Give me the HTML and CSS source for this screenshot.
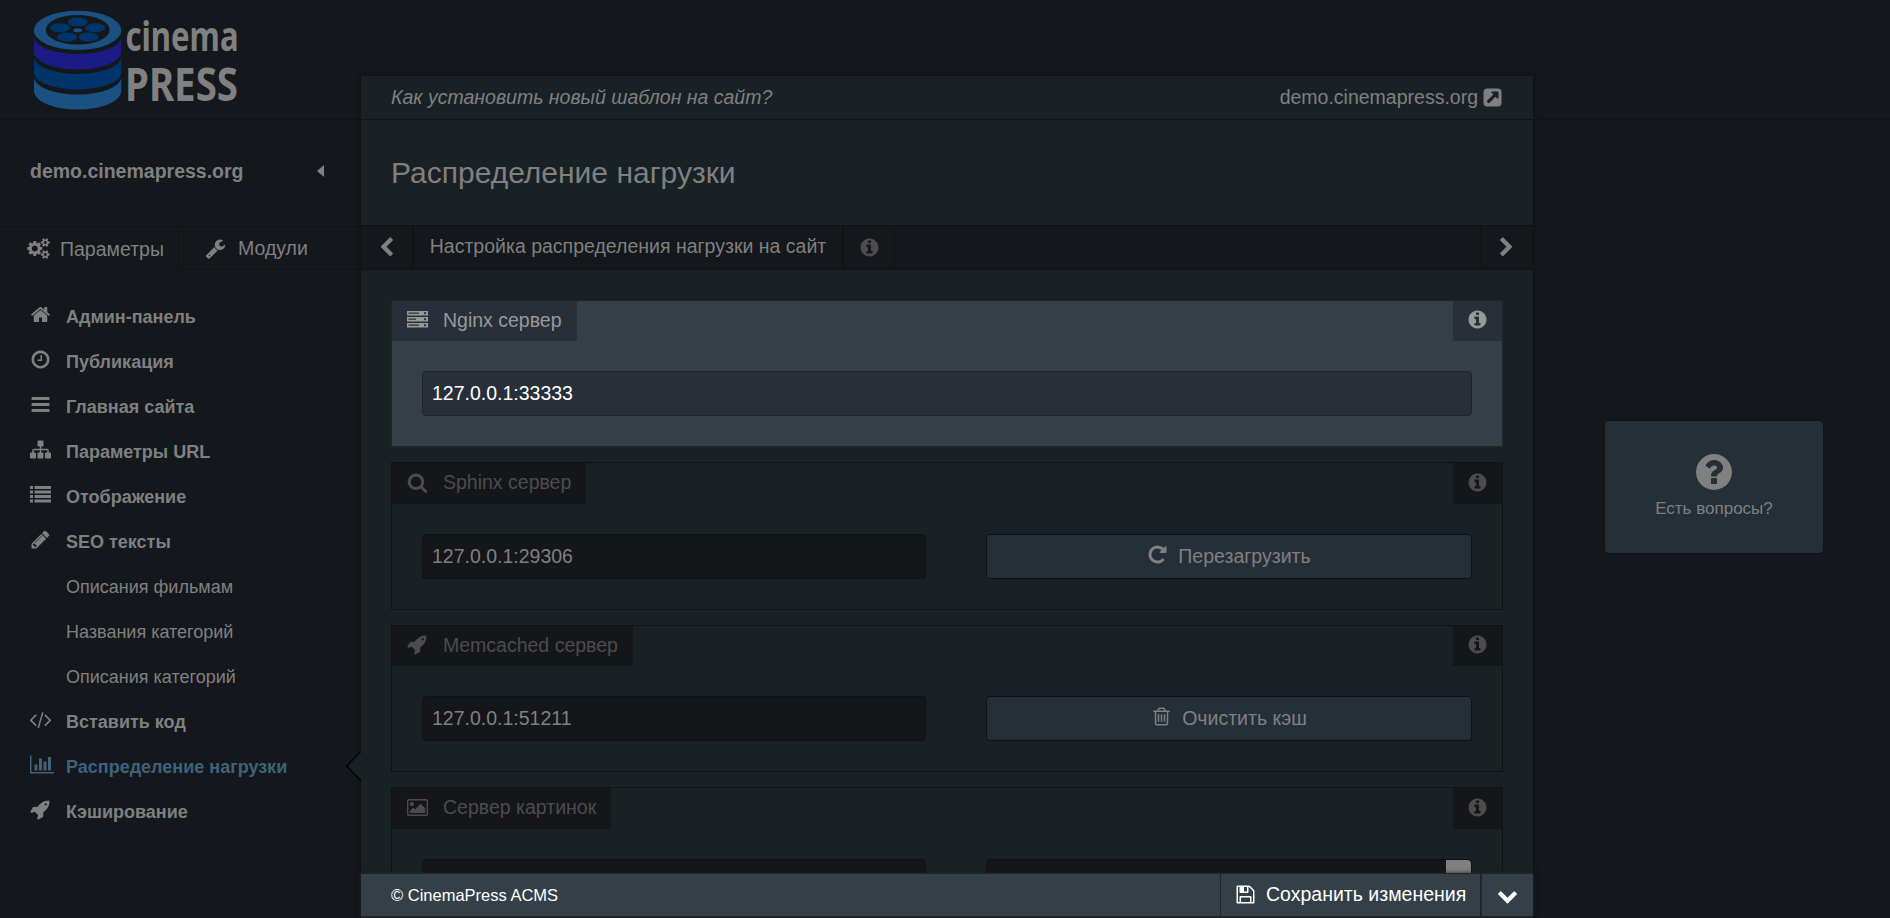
FILE: index.html
```html
<!DOCTYPE html>
<html lang="ru">
<head>
<meta charset="utf-8">
<title>CinemaPress ACMS</title>
<link rel="stylesheet" href="styles.css">
</head>
<body>
<svg class="sprite" aria-hidden="true">
  <symbol id="home" viewBox="0 0 1792 1792"><path d="M1472 992v480q0 26-19 45t-45 19h-384v-384h-256v384h-384q-26 0-45-19t-19-45v-480q0-1 .5-3t.5-3l575-474 575 474q1 2 1 6zm223-69l-62 74q-8 9-21 11h-3q-13 0-21-7l-692-577-692 577q-12 8-24 7-13-2-21-11l-62-74q-8-10-7-23.5t11-21.5l719-599q32-26 76-26t76 26l244 204v-195q0-14 9-23t23-9h192q14 0 23 9t9 23v408l219 182q10 8 11 21.5t-7 23.5z"/></symbol>
  <symbol id="clock" viewBox="0 0 1792 1792"><path d="M1024 544v448q0 14-9 23t-23 9h-320q-14 0-23-9t-9-23v-64q0-14 9-23t23-9h224v-352q0-14 9-23t23-9h64q14 0 23 9t9 23zm416 352q0-148-73-273t-198-198-273-73-273 73-198 198-73 273 73 273 198 198 273 73 273-73 198-198 73-273zm224 0q0 209-103 385.5t-279.5 279.5-385.5 103-385.5-103-279.5-279.5-103-385.5 103-385.5 279.5-279.5 385.5-103 385.5 103 279.5 279.5 103 385.5z"/></symbol>
  <symbol id="bars" viewBox="0 0 1792 1792"><path d="M1664 1344v128q0 26-19 45t-45 19h-1408q-26 0-45-19t-19-45v-128q0-26 19-45t45-19h1408q26 0 45 19t19 45zm0-512v128q0 26-19 45t-45 19h-1408q-26 0-45-19t-19-45v-128q0-26 19-45t45-19h1408q26 0 45 19t19 45zm0-512v128q0 26-19 45t-45 19h-1408q-26 0-45-19t-19-45v-128q0-26 19-45t45-19h1408q26 0 45 19t19 45z"/></symbol>
  <symbol id="sitemap" viewBox="0 0 1792 1792"><path d="M1792 1248v320q0 40-28 68t-68 28h-320q-40 0-68-28t-28-68v-320q0-40 28-68t68-28h96v-192h-512v192h96q40 0 68 28t28 68v320q0 40-28 68t-68 28h-320q-40 0-68-28t-28-68v-320q0-40 28-68t68-28h96v-192h-512v192h96q40 0 68 28t28 68v320q0 40-28 68t-68 28h-320q-40 0-68-28t-28-68v-320q0-40 28-68t68-28h96v-192q0-52 38-90t90-38h512v-192h-96q-40 0-68-28t-28-68v-320q0-40 28-68t68-28h320q40 0 68 28t28 68v320q0 40-28 68t-68 28h-96v192h512q52 0 90 38t38 90v192h96q40 0 68 28t28 68z"/></symbol>
  <symbol id="list" viewBox="0 0 1792 1792"><path d="M0 160h256v256H0zM384 160h1408v256H384zM0 544h256v256H0zM384 544h1408v256H384zM0 928h256v256H0zM384 928h1408v256H384zM0 1312h256v256H0zM384 1312h1408v256H384z"/></symbol>
  <symbol id="pencil" viewBox="0 0 1792 1792"><path d="M491 1536l91-91-235-235-91 91v107h128v128h107zm523-928q0-22-22-22-10 0-17 7l-542 542q-7 7-7 17 0 22 22 22 10 0 17-7l542-542q7-7 7-17zm-54-192l416 416-832 832h-416v-416zm683 96q0 53-37 90l-166 166-416-416 166-165q36-38 90-38 53 0 91 38l235 234q37 39 37 91z"/></symbol>
  <symbol id="code" viewBox="0 0 1792 1792"><path d="M553 1399l-50 50q-10 10-23 10t-23-10l-466-466q-10-10-10-23t10-23l466-466q10-10 23-10t23 10l50 50q10 10 10 23t-10 23l-393 393 393 393q10 10 10 23t-10 23zm591-1067l-373 1291q-4 13-15.5 19.5t-23.5 2.5l-62-17q-13-4-19.5-15.5t-2.5-24.5l373-1291q4-13 15.5-19.5t23.5-2.5l62 17q13 4 19.5 15.5t2.5 24.5zm657 651l-466 466q-10 10-23 10t-23-10l-50-50q-10-10-10-23t10-23l393-393-393-393q-10-10-10-23t10-23l50-50q10-10 23-10t23 10l466 466q10 10 10 23t-10 23z"/></symbol>
  <symbol id="chart" viewBox="0 0 2048 1792"><path d="M640 896v512h-256v-512h256zm384-512v1024h-256v-1024h256zm1024 1152v128h-2048v-1536h128v1408h1920zm-640-896v768h-256v-768h256zm384-384v1152h-256v-1152h256z"/></symbol>
  <symbol id="rocket" viewBox="0 0 1792 1792"><path d="M1440 448q0-40-28-68t-68-28-68 28-28 68 28 68 68 28 68-28 28-68zm224-288q0 249-75.5 430.5t-253.5 360.5q-81 80-195 176l-20 379q-2 16-16 26l-384 224q-7 4-16 4-12 0-23-9l-64-64q-13-14-8-32l85-276-281-281-276 85q-3 1-9 1-14 0-23-9l-64-64q-17-19-5-39l224-384q10-14 26-16l379-20q96-114 176-195 188-187 358-258t431-71q14 0 24 9.5t10 22.5z"/></symbol>
  <symbol id="wrench" viewBox="0 0 1792 1792"><path d="M448 1472q0-26-19-45t-45-19-45 19-19 45 19 45 45 19 45-19 19-45zm644-420l-682 682q-37 37-90 37-52 0-91-37l-106-108q-38-36-38-90 0-53 38-91l681-681q39 98 114.5 173.5t173.5 114.5zm634-435q0 39-23 106-47 134-164.5 217.5t-258.5 83.5q-185 0-316.5-131.5t-131.5-316.5 131.5-316.5 316.5-131.5q58 0 121.5 16.5t107.5 46.5q16 11 16 28t-16 28l-293 169v224l193 107q5-3 79-48.5t135.5-81 70.5-35.5q15 0 23.5 10t8.5 25z"/></symbol>
  <symbol id="cogs" viewBox="0 0 1920 1792"><path d="M896 896q0-106-75-181t-181-75-181 75-75 181 75 181 181 75 181-75 75-181zm768 512q0-52-38-90t-90-38-90 38-38 90q0 53 37.5 90.5t90.5 37.5 90.5-37.5 37.5-90.5zm0-1024q0-52-38-90t-90-38-90 38-38 90q0 53 37.5 90.5t90.5 37.5 90.5-37.5 37.5-90.5zm-384 421v185q0 10-7 19.5t-16 10.5l-155 24q-11 35-32 76 34 48 90 115 7 11 7 20 0 12-7 19-23 30-82.5 89.5t-78.5 59.5q-11 0-21-7l-115-90q-37 19-77 31-11 108-23 155-7 24-30 24h-186q-11 0-20-7.5t-10-17.5l-23-153q-34-10-75-31l-118 89q-7 7-20 7-11 0-21-8-144-133-144-160 0-9 7-19 10-14 41-53t47-61q-23-44-35-82l-152-24q-10-1-17-9.5t-7-19.5v-185q0-10 7-19.5t16-10.5l155-24q11-35 32-76-34-48-90-115-7-11-7-20 0-12 7-20 22-30 82-89t79-59q11 0 21 7l115 90q34-18 77-32 11-108 23-154 7-24 30-24h186q11 0 20 7.5t10 17.5l23 153q34 10 75 31l118-89q8-7 20-7 11 0 21 8 144 133 144 160 0 8-7 19-12 16-42 54t-45 60q23 48 34 82l152 23q10 2 17 10.5t7 19.5zm640 533v140q0 16-149 31-12 27-30 52 51 113 51 138 0 4-4 7-122 71-124 71-8 0-46-47t-52-68q-20 2-30 2t-30-2q-14 21-52 68t-46 47q-2 0-124-71-4-3-4-7 0-25 51-138-18-25-30-52-149-15-149-31v-140q0-16 149-31 13-29 30-52-51-113-51-138 0-4 4-7 4-2 35-20t59-34 30-16q8 0 46 46.5t52 67.5q20-2 30-2t30 2q51-71 92-112l6-2q4 0 124 70 4 3 4 7 0 25-51 138 17 23 30 52 149 15 149 31zm0-1024v140q0 16-149 31-12 27-30 52 51 113 51 138 0 4-4 7-122 71-124 71-8 0-46-47t-52-68q-20 2-30 2t-30-2q-14 21-52 68t-46 47q-2 0-124-71-4-3-4-7 0-25 51-138-18-25-30-52-149-15-149-31v-140q0-16 149-31 13-29 30-52-51-113-51-138 0-4 4-7 4-2 35-20t59-34 30-16q8 0 46 46.5t52 67.5q20-2 30-2t30 2q51-71 92-112l6-2q4 0 124 70 4 3 4 7 0 25-51 138 17 23 30 52 149 15 149 31z"/></symbol>
  <symbol id="info" viewBox="0 0 1792 1792"><path d="M1152 1376v-160q0-14-9-23t-23-9h-96v-512q0-14-9-23t-23-9h-320q-14 0-23 9t-9 23v160q0 14 9 23t23 9h96v320h-96q-14 0-23 9t-9 23v160q0 14 9 23t23 9h448q14 0 23-9t9-23zm-128-896v-160q0-14-9-23t-23-9h-192q-14 0-23 9t-9 23v160q0 14 9 23t23 9h192q14 0 23-9t9-23zm640 416q0 209-103 385.5t-279.5 279.5-385.5 103-385.5-103-279.5-279.5-103-385.5 103-385.5 279.5-279.5 385.5-103 385.5 103 279.5 279.5 103 385.5z"/></symbol>
  <symbol id="question" viewBox="0 0 1792 1792"><path d="M1024 1376v-192q0-14-9-23t-23-9h-192q-14 0-23 9t-9 23v192q0 14 9 23t23 9h192q14 0 23-9t9-23zm256-672q0-88-55.5-163t-138.5-116-170-41q-243 0-371 213-15 24 8 42l132 100q7 6 19 6 16 0 25-12 53-68 86-92 34-24 86-24 48 0 85.5 26t37.5 59q0 38-20 61t-68 45q-63 28-115.5 86.5t-52.5 125.5v36q0 14 9 23t23 9h192q14 0 23-9t9-23q0-19 21.5-49.5t54.5-49.5q32-18 49-28.5t46-35 44.5-48 28-60.5 12.5-81zm384 192q0 209-103 385.5t-279.5 279.5-385.5 103-385.5-103-279.5-279.5-103-385.5 103-385.5 279.5-279.5 385.5-103 385.5 103 279.5 279.5 103 385.5z"/></symbol>
  <symbol id="left" viewBox="0 0 1792 1792"><path d="M1427 301l-531 531 531 531q19 19 19 45t-19 45l-166 166q-19 19-45 19t-45-19l-742-742q-19-19-19-45t19-45l742-742q19-19 45-19t45 19l166 166q19 19 19 45t-19 45z"/></symbol>
  <symbol id="right" viewBox="0 0 1792 1792"><path d="M1363 877l-742 742q-19 19-45 19t-45-19l-166-166q-19-19-19-45t19-45l531-531-531-531q-19-19-19-45t19-45l166-166q19-19 45-19t45 19l742 742q19 19 19 45t-19 45z"/></symbol>
  <symbol id="down" viewBox="0 0 1792 1792"><path d="M1683 808l-742 741q-19 19-45 19t-45-19l-742-741q-19-19-19-45.5t19-45.5l166-165q19-19 45-19t45 19l531 531 531-531q19-19 45-19t45 19l166 165q19 19 19 45.5t-19 45.5z"/></symbol>
  <symbol id="external" viewBox="0 0 1792 1792"><path d="M1408 928v-480q0-26-19-45t-45-19h-480q-42 0-59 39-17 41 14 70l144 144-534 534q-19 19-19 45t19 45l102 102q19 19 45 19t45-19l534-534 144 144q18 19 45 19 12 0 25-5 39-17 39-59zm256-512v960q0 119-84.5 203.5t-203.5 84.5h-960q-119 0-203.5-84.5t-84.5-203.5v-960q0-119 84.5-203.5t203.5-84.5h960q119 0 203.5 84.5t84.5 203.5z"/></symbol>
  <symbol id="search" viewBox="0 0 1792 1792"><path d="M1216 832q0-185-131.5-316.5t-316.5-131.5-316.5 131.5-131.5 316.5 131.5 316.5 316.5 131.5 316.5-131.5 131.5-316.5zm512 832q0 52-38 90t-90 38q-54 0-90-38l-343-342q-179 124-399 124-143 0-273.5-55.5t-225-150-150-225-55.5-273.5 55.5-273.5 150-225 225-150 273.5-55.5 273.5 55.5 225 150 150 225 55.5 273.5q0 220-124 399l343 343q37 37 37 90z"/></symbol>
  <symbol id="server" viewBox="0 0 1792 1792"><path fill-rule="evenodd" d="M0 160h1792v384H0zM128 290v110h896v-110zM1540 256a96 96 0 1 0 .1 0zM0 672h1792v384H0zM128 810v110h640v-110zM1540 768a96 96 0 1 0 .1 0zM0 1184h1792v384H0zM128 1320v110h896v-110zM1540 1280a96 96 0 1 0 .1 0z"/></symbol>
  <symbol id="picture" viewBox="-64 0 1920 1792"><path d="M576 576q0 80-56 136t-136 56-136-56-56-136 56-136 136-56 136 56 56 136zm1024 384v448h-1408v-192l320-320 160 160 512-512zm96-704h-1600q-13 0-22.5 9.5t-9.5 22.5v1216q0 13 9.5 22.5t22.5 9.5h1600q13 0 22.5-9.5t9.5-22.5v-1216q0-13-9.5-22.5t-22.5-9.5zm160 32v1216q0 66-47 113t-113 47h-1600q-66 0-113-47t-47-113v-1216q0-66 47-113t113-47h1600q66 0 113 47t47 113z"/></symbol>
  <symbol id="repeat" viewBox="0 0 1792 1792"><path d="M1664 256v448q0 26-19 45t-45 19h-448q-42 0-59-40-17-39 14-69l138-138q-148-137-349-137-104 0-198.5 40.5t-163.5 109.5-109.5 163.5-40.5 198.5 40.5 198.5 109.5 163.5 163.5 109.5 198.5 40.5q119 0 225-52t179-147q7-10 23-12 15 0 25 9l137 138q9 8 9.5 20.5t-7.5 22.5q-109 132-264 204.5t-327 72.5q-156 0-298-61t-245-164-164-245-61-298 61-298 164-245 245-164 298-61q147 0 284.5 55.5t244.5 156.5l130-129q29-31 70-14 39 17 39 59z"/></symbol>
  <symbol id="trash" viewBox="0 0 1792 1792"><path d="M704 736v576q0 14-9 23t-23 9h-64q-14 0-23-9t-9-23v-576q0-14 9-23t23-9h64q14 0 23 9t9 23zm256 0v576q0 14-9 23t-23 9h-64q-14 0-23-9t-9-23v-576q0-14 9-23t23-9h64q14 0 23 9t9 23zm256 0v576q0 14-9 23t-23 9h-64q-14 0-23-9t-9-23v-576q0-14 9-23t23-9h64q14 0 23 9t9 23zm128 724v-948h-896v948q0 22 7 40.5t14.5 27 10.5 8.5h832q3 0 10.5-8.5t14.5-27 7-40.5zm-672-1076h448l-48-117q-7-9-17-11h-317q-10 2-17 11zm928 32v64q0 14-9 23t-23 9h-96v948q0 83-47 143.5t-113 60.5h-832q-66 0-113-58.5t-47-141.5v-952h-96q-14 0-23-9t-9-23v-64q0-14 9-23t23-9h309l70-167q15-37 54-63t79-26h320q40 0 79 26t54 63l70 167h309q14 0 23 9t9 23z"/></symbol>
  <symbol id="save" viewBox="0 0 1792 1792"><path d="M512 1536h768v-384h-768v384zm896 0h128v-896q0-14-10-38.5t-20-34.5l-281-281q-10-10-34-20t-39-10v416q0 40-28 68t-68 28h-576q-40 0-68-28t-28-68v-416h-128v1280h128v-416q0-40 28-68t68-28h832q40 0 68 28t28 68v416zm-384-928v-320q0-13-9.5-22.5t-22.5-9.5h-192q-13 0-22.5 9.5t-9.5 22.5v320q0 13 9.5 22.5t22.5 9.5h192q13 0 22.5-9.5t9.5-22.5zm640 32v928q0 40-28 68t-68 28h-1344q-40 0-68-28t-28-68v-1344q0-40 28-68t68-28h928q40 0 88 20t76 48l280 280q28 28 48 76t20 88z"/></symbol>
</svg>

<div class="page">
  <aside class="sidebar">
    <a class="logo">
      <svg width="250" height="119" viewBox="0 0 250 119">
        <path fill="#1b1b85" d="M34 37.8A43.7 17 0 0 0 121.3 37.8V53A43.7 17.2 0 0 1 34 53z"/>
        <path fill="#003569" d="M34 57.6A43.7 17.3 0 0 0 121.3 57.6V73.5A43.7 16.7 0 0 1 34 73.5z"/>
        <path fill="#1a5082" d="M34 78A43.7 17.3 0 0 0 121.3 78V92A43.7 18.4 0 0 1 34 92z"/>
        <ellipse cx="77.6" cy="30.3" rx="43.8" ry="19.6" fill="#1a5082"/>
        <ellipse cx="77.7" cy="29.8" rx="32" ry="14.7" fill="#14171b"/>
        <g fill="#003569">
          <ellipse cx="77.7" cy="22" rx="10" ry="4.5"/>
          <ellipse cx="60" cy="27.8" rx="10" ry="4.5"/>
          <ellipse cx="95.3" cy="27.8" rx="10" ry="4.5"/>
          <ellipse cx="67" cy="37" rx="10" ry="4.5"/>
          <ellipse cx="88.5" cy="37" rx="10" ry="4.5"/>
        </g>
        <ellipse cx="77.7" cy="30.2" rx="4.3" ry="2" fill="#1a5082"/>
        <text class="logo-text" x="125.5" y="51" font-size="41" textLength="113" lengthAdjust="spacingAndGlyphs">cinema</text>
        <text class="logo-text" x="125" y="101" font-size="47" textLength="113" lengthAdjust="spacingAndGlyphs">PRESS</text>
      </svg>
    </a>
    <div class="account"><span>demo.cinemapress.org</span><i class="caret"></i></div>
    <div class="side-tabs">
      <a class="side-tab params"><svg class="ico cogs"><use href="#cogs"/></svg>Параметры</a>
      <a class="side-tab modules"><svg class="ico"><use href="#wrench"/></svg>Модули</a>
    </div>
    <nav class="menu">
      <a><svg class="ico"><use href="#home"/></svg>Админ-панель</a>
      <a><svg class="ico"><use href="#clock"/></svg>Публикация</a>
      <a><svg class="ico"><use href="#bars"/></svg>Главная сайта</a>
      <a><svg class="ico"><use href="#sitemap"/></svg>Параметры URL</a>
      <a><svg class="ico"><use href="#list"/></svg>Отображение</a>
      <a><svg class="ico"><use href="#pencil"/></svg>SEO тексты</a>
      <a class="sub">Описания фильмам</a>
      <a class="sub">Названия категорий</a>
      <a class="sub">Описания категорий</a>
      <a><svg class="ico"><use href="#code"/></svg>Вставить код</a>
      <a class="active"><svg class="ico chart"><use href="#chart"/></svg>Распределение нагрузки<svg class="pointer" viewBox="0 0 15 30"><path d="M15 0.5L0.7 15L15 29.5"/></svg></a>
      <a><svg class="ico"><use href="#rocket"/></svg>Кэширование</a>
    </nav>
  </aside>

  <main class="main">
    <div class="topbar"><em>Как установить новый шаблон на сайт?</em><a class="site">demo.cinemapress.org<svg class="ico"><use href="#external"/></svg></a></div>
    <h1 class="title">Распределение нагрузки</h1>
    <div class="tabs">
      <a class="arrow"><svg class="ico"><use href="#left"/></svg></a>
      <a class="tab">Настройка распределения нагрузки на сайт</a>
      <a class="tab-info"><svg class="ico"><use href="#info"/></svg></a>
      <a class="arrow next"><svg class="ico"><use href="#right"/></svg></a>
    </div>
    <div class="cards">
      <section class="card lit">
        <header><h2><svg class="ico"><use href="#server"/></svg>Nginx сервер</h2><span class="hint"><svg class="ico"><use href="#info"/></svg></span></header>
        <div class="fields"><div class="field">127.0.0.1:33333</div></div>
      </section>
      <section class="card tall">
        <header><h2><svg class="ico"><use href="#search"/></svg>Sphinx сервер</h2><span class="hint"><svg class="ico"><use href="#info"/></svg></span></header>
        <div class="fields"><div class="field">127.0.0.1:29306</div><a class="button"><svg class="ico"><use href="#repeat"/></svg>Перезагрузить</a></div>
      </section>
      <section class="card">
        <header><h2><svg class="ico"><use href="#rocket"/></svg>Memcached сервер</h2><span class="hint"><svg class="ico"><use href="#info"/></svg></span></header>
        <div class="fields"><div class="field">127.0.0.1:51211</div><a class="button"><svg class="ico trash"><use href="#trash"/></svg>Очистить кэш</a></div>
      </section>
      <section class="card tall">
        <header><h2><svg class="ico"><use href="#picture"/></svg>Сервер картинок</h2><span class="hint"><svg class="ico"><use href="#info"/></svg></span></header>
        <div class="fields"><div class="field"></div><div class="field select"><i></i></div></div>
      </section>
    </div>
    <footer class="footer">
      <span class="copy">© CinemaPress ACMS</span>
      <a class="save"><svg class="ico"><use href="#save"/></svg>Сохранить изменения</a>
      <a class="to-bottom"><svg class="ico"><use href="#down"/></svg></a>
    </footer>
  </main>

  <div class="aside">
    <a class="help"><svg><use href="#question"/></svg>Есть вопросы?</a>
  </div>
</div>
</body>
</html>
```
FILE: styles.css
```css
* { box-sizing: border-box; }

body {
  margin: 0;
  background: #14171b;
  color: #808080;
  font: 19.5px/24px "Liberation Sans", Arial, sans-serif;
}

.sprite { display: none; }

.ico {
  width: 21px;
  height: 21px;
  flex: none;
  fill: currentColor;
}

.page {
  display: grid;
  grid-template-columns: 361px 1172px 1fr;
  height: 918px;
  overflow: hidden;
}

/* Sidebar */
.logo {
  display: block;
  height: 120px;
  border-bottom: 1px solid #111214;
}
.logo svg { display: block; }
.logo-text {
  font-family: "Noto Sans", sans-serif;
  font-weight: 700;
  fill: #808080;
}

.account {
  display: flex;
  align-items: center;
  justify-content: space-between;
  height: 107px;
  padding: 0 37px 4px 30px;
  border-bottom: 1px solid #111214;
  font-weight: 700;
}
.caret {
  border: 6px solid transparent;
  border-left: 0;
  border-right: 7px solid #808080;
}

.side-tabs { display: flex; height: 43px; }
.side-tab { display: flex; align-items: center; }
.params { width: 179px; padding-left: 27px; gap: 10px; border-right: 1px solid #111214; }
.modules { flex: 1; padding-left: 26px; gap: 12px; border-bottom: 1px solid #111214; }
.cogs { width: 23px; }

.menu { padding-top: 23px; font-size: 18px; font-weight: 700; }
.menu a {
  display: flex;
  align-items: center;
  position: relative;
  height: 45px;
  padding: 2px 0 0 30px;
  gap: 15px;
}
.menu .ico { margin-top: -5px; }
.menu .sub { padding-left: 66px; font-weight: 400; }
.menu .active { color: #41627a; }
.menu .chart { width: 24px; margin-right: -3px; }
.pointer {
  position: absolute;
  right: 0;
  top: 8px;
  width: 15px;
  height: 30px;
  fill: #1a2124;
  stroke: #000;
  stroke-width: 1.2;
}

/* Main panel */
.main {
  display: flex;
  flex-direction: column;
  height: 842px;
  margin-top: 76px;
  background: #1a2124;
  box-shadow: 0 0 0 1px #121314, 0 0 4px #111213;
}
.topbar {
  display: flex;
  flex: none;
  justify-content: space-between;
  align-items: center;
  height: 44px;
  padding: 0 30px 1px;
  border-bottom: 1px solid #101213;
}
.site { display: flex; align-items: center; gap: 4px; }
.title {
  flex: none;
  height: 105px;
  margin: 0;
  padding: 0 30px;
  font-size: 30px;
  font-weight: 400;
  line-height: 106px;
}
.tabs {
  display: flex;
  flex: none;
  height: 45px;
  background: #14171b;
  border: solid #101113;
  border-width: 1px 0;
}
.tabs a { display: flex; align-items: center; justify-content: center; border-right: 2px solid #111214; }
.tabs .ico { margin-top: -1px; }
.arrow { width: 53px; }
.tabs .tab { width: 430px; padding-bottom: 3px; }
.tabs .tab-info { width: 51px; color: #4c4c4c; border-right-width: 1px; }
.tabs .next { margin-left: auto; border-left: 1px solid #111214; border-right-width: 1px; }

/* Cards */
.cards { flex: 1; min-height: 0; overflow: hidden; padding: 30px 30px 0; }
.card {
  height: 147px;
  margin-bottom: 15px;
  border: 1px solid #101213;
}
.card header { display: flex; justify-content: space-between; height: 40px; color: #4c4c4c; }
.card h2 {
  display: flex;
  align-items: center;
  gap: 15px;
  margin: 0;
  padding: 0 15px 3px;
  background: #14161a;
  font-size: 19.5px;
  font-weight: 400;
}
.hint {
  display: flex;
  align-items: center;
  justify-content: center;
  width: 49px;
  padding-bottom: 3px;
  background: #14161a;
}
.tall { height: 148px; }
.tall header { height: 41px; }
.fields { display: flex; gap: 60px; padding: 30px; }
.field, .button {
  flex: 1;
  display: flex;
  align-items: center;
  height: 45px;
  border: 1px solid #101113;
  border-radius: 4px;
}
.field { padding: 0 9px 2px; background: #14161a; }
.button { justify-content: center; gap: 10px; padding-bottom: 2px; background: #262e37; }
.button .ico { margin-top: -2px; }
.select { justify-content: flex-end; padding: 0; }
.select i { width: 25px; height: 43px; background: #808080; border-radius: 0 4px 4px 0; }

.lit { background: #343f48; border-color: #222426; }
.lit header { color: #999; }
.lit h2, .lit .hint { background: #282f38; }
.lit .field { background: #282f38; border-color: #212325; color: #fff; }

/* Footer */
.footer {
  position: relative;
  display: flex;
  flex: none;
  height: 45px;
  background: #343f48;
  border: solid #222426;
  border-width: 1px 0 2px;
  box-shadow: 0 0 4px #252525;
  color: #fff;
}
.copy { flex: 1; padding: 9px 30px; font-size: 16.5px; }
.save {
  display: flex;
  align-items: center;
  gap: 10px;
  width: 262px;
  padding: 0 0 2px 14px;
  border: solid #222426;
  border-width: 0 2px 0 1px;
}
.to-bottom { display: flex; align-items: center; justify-content: center; width: 51px; }

/* Help */
.aside { padding: 119px 0 0; background: linear-gradient(#111214, #111214) 0 119px / 100% 1px no-repeat; }
.help {
  display: flex;
  flex-direction: column;
  align-items: center;
  width: 218px;
  height: 132px;
  margin: 302px 0 0 72px;
  padding-top: 30px;
  background: #262e37;
  border-radius: 4px;
  box-shadow: 0 0 0 1px #121416;
  font-size: 17px;
}
.help svg { width: 42px; height: 42px; margin-bottom: 4px; fill: currentColor; }
```
